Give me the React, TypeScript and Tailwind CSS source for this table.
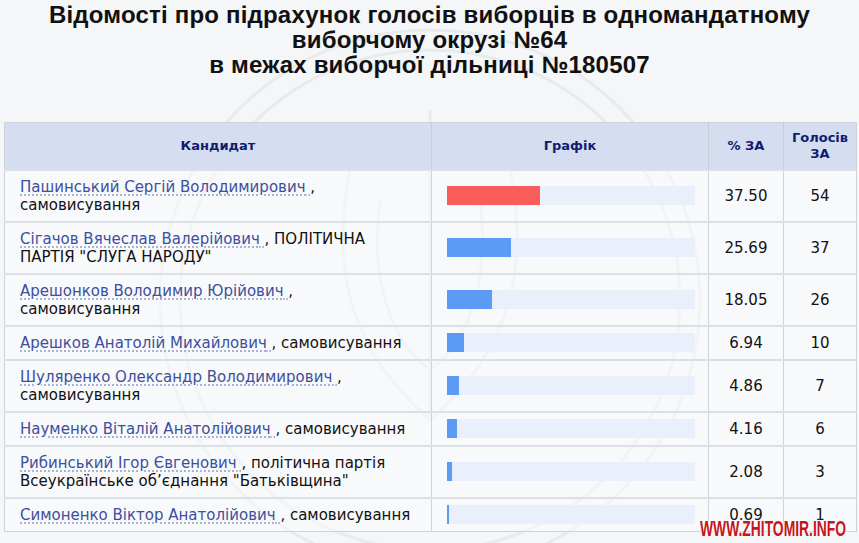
import React from "react";

type Row = {
  name: string;
  party: string;
  pct: number;
  votes: number;
};

const rows: Row[] = [
  { name: "Пашинський Сергій Володимирович", party: "самовисування", pct: 37.5, votes: 54 },
  { name: "Сігачов Вячеслав Валерійович", party: "ПОЛІТИЧНА ПАРТІЯ \"СЛУГА НАРОДУ\"", pct: 25.69, votes: 37 },
  { name: "Арешонков Володимир Юрійович", party: "самовисування", pct: 18.05, votes: 26 },
  { name: "Арешков Анатолій Михайлович", party: "самовисування", pct: 6.94, votes: 10 },
  { name: "Шуляренко Олександр Володимирович", party: "самовисування", pct: 4.86, votes: 7 },
  { name: "Науменко Віталій Анатолійович", party: "самовисування", pct: 4.16, votes: 6 },
  { name: "Рибинський Ігор Євгенович", party: "політична партія Всеукраїнське об’єднання \"Батьківщина\"", pct: 2.08, votes: 3 },
  { name: "Симоненко Віктор Анатолійович", party: "самовисування", pct: 0.69, votes: 1 },
];

function Emblem() {
  // faint coat of arms watermark behind the table
  return (
    <svg
      className="pointer-events-none absolute left-[150px] top-[20px]"
      width="560"
      height="560"
      viewBox="0 0 560 560"
      fill="none"
      stroke="#e8ebee"
      strokeWidth="3"
    >
      <circle cx="280" cy="280" r="270" />
      <circle cx="280" cy="280" r="250" />
      <path d="M280 90 L280 400 M200 150 C180 250 200 330 280 400 C360 330 380 250 360 150" />
      <path d="M230 180 C220 260 240 320 280 350 C320 320 340 260 330 180" />
    </svg>
  );
}

export default function App() {
  return (
    <div
      className="relative h-[543px] w-[859px] overflow-hidden bg-[#f4f6f8] text-[#111]"
      style={{ fontFamily: "Verdana, 'DejaVu Sans', sans-serif" }}
    >
      <Emblem />

      <h1
        className="relative pt-[2px] text-center text-[24px] font-bold leading-[25px] tracking-[0.2px] text-[#111]"
        style={{ fontFamily: "'Liberation Sans Narrow', 'Liberation Sans', sans-serif" }}
      >
        Відомості про підрахунок голосів виборців в одномандатному
        <br />
        виборчому окрузі №64
        <br />
        в межах виборчої дільниці №180507
      </h1>

      <table className="relative ml-[4px] mt-[45px] w-[852px] table-fixed border-collapse border border-[#cfd3d8]">
        <colgroup>
          <col className="w-[427px]" />
          <col className="w-[277px]" />
          <col className="w-[75px]" />
          <col className="w-[73px]" />
        </colgroup>
        <thead>
          <tr className="h-[47px] bg-[#d5ddf1] text-[13px] font-bold leading-[16px] text-[#111c6e]">
            <th className="border-r border-[#c9ced6] font-bold">Кандидат</th>
            <th className="border-r border-[#c9ced6] font-bold">Графік</th>
            <th className="border-r border-[#c9ced6] font-bold">% ЗА</th>
            <th className="px-1 font-bold">
              Голосів
              <br />
              ЗА
            </th>
          </tr>
        </thead>
        <tbody className="text-[15px] leading-[18px]">
          {rows.map((r, i) => (
            <tr key={i} className="border-t-2 border-[#dcdfe3] bg-white/40">
              <td className="border-r border-[#d0d4d9] py-[7px] pl-[15px] pr-[18px] align-top">
                <a className="text-[#3d4f9d] underline decoration-[#8e9ccc] decoration-dotted underline-offset-[3px]">
                  {r.name}{" "}
                </a>
                , {r.party}
              </td>
              <td className="border-r border-[#d0d4d9] pl-[15px]">
                <div className="h-[19px] w-[248px] bg-[#e9f0fb]">
                  <div
                    className={i === 0 ? "h-full bg-[#fb5d5d]" : "h-full bg-[#5b9bf5]"}
                    style={{ width: `${r.pct}%` }}
                  />
                </div>
              </td>
              <td className="border-r border-[#d0d4d9] text-center">{r.pct.toFixed(2)}</td>
              <td className="text-center">{r.votes}</td>
            </tr>
          ))}
        </tbody>
      </table>

      <div
        className="absolute left-[700px] top-[518px] origin-left scale-x-[0.63] whitespace-nowrap text-[22px] font-bold leading-[22px] text-[#c4161c]"
        style={{
          fontFamily: "'Liberation Sans', sans-serif",
          textShadow: "0 0 2px #fff, 0 0 2px #fff, 0 0 3px #fff",
        }}
      >
        WWW.ZHITOMIR.INFO
      </div>
    </div>
  );
}
